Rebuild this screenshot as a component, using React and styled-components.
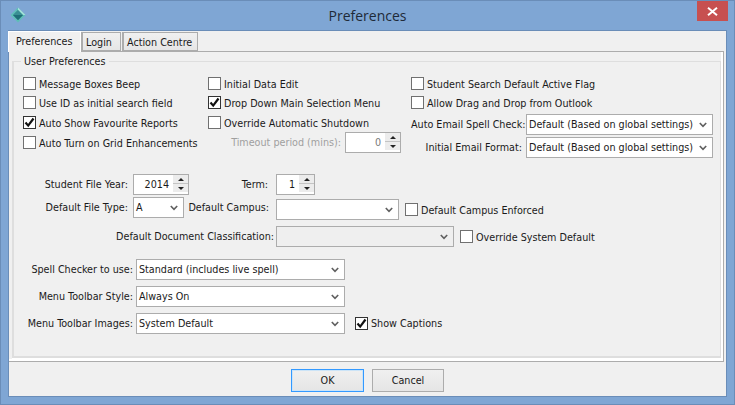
import React from "react";
import styled, { createGlobalStyle } from "styled-components";

const Global = createGlobalStyle`
  html, body { margin: 0; padding: 0; background: #7fa6d4; }
  * { box-sizing: border-box; }
`;

const Win = styled.div`
  width: 735px; height: 405px; overflow: hidden;
  background: #7fa6d4;
  border: 1px solid #6a8db8;
  display: flex; flex-direction: column;
  font-family: "DejaVu Sans Condensed", "DejaVu Sans", sans-serif;
  font-size: 10.7px; color: #1a1a1a;
`;
const TitleBar = styled.div`
  height: 29px; flex: none; position: relative;
  display: flex; align-items: center; justify-content: center;
  font-family: "Open Sans", sans-serif; font-size: 14px; color: #1e2a38;
  padding-bottom: 1px;
`;
const AppIcon = styled.svg`
  position: absolute; left: 9px; top: 6px; width: 16px; height: 16px;
`;
const Close = styled.div`
  position: absolute; right: 6px; top: 0; width: 31px; height: 20px;
  background: #c75050; display: flex; align-items: center; justify-content: center;
`;
const Client = styled.div`
  margin: 0 7px 7px 7px; flex: 1; min-height: 0;
  background: #f0f0f0; border: 1px solid #6a8db8;
  display: flex; flex-direction: column;
`;
const Tabs = styled.div`
  height: 20px; flex: none; display: flex; align-items: flex-end; margin-left: -1px;
  margin-right: 2px; position: relative; z-index: 1;
`;
const Tab = styled.div`
  border: 1px solid #acacac;
  border-bottom: ${p => (p.$active ? "none" : "1px solid #acacac")};
  border-color: ${p => (p.$active ? "#fff" : "#acacac")};
  border-left-width: ${p => (p.$active ? "1px" : "2px")};
  background: ${p => (p.$active ? "#f0f0f0" : "linear-gradient(#f0f0f0,#e6e6e6)")};
  height: ${p => (p.$active ? "21px" : "19px")};
  width: ${p => p.$w}px;
  margin-right: ${p => (p.$active ? "0" : "1px")};
  margin-bottom: ${p => (p.$active ? "-1px" : "0")};
  padding: ${p => (p.$active ? "0 0 2px 7px" : "1px 0 0 3px")};
  display: flex; align-items: center; white-space: nowrap;
`;
const Panel = styled.div`
  height: 311px; flex: none; margin-right: 2px;
  border-top: 1px solid #acacac; border-right: 1px solid #acacac; border-bottom: 1px solid #acacac;
  box-shadow: inset 0 -2px 0 #fff, inset -2px 0 0 #fff;
  padding: 9px 2px 2px 3px;
`;
const Group = styled.fieldset`
  margin: 0; padding: 0 0 0 9px; height: 297px; min-width: 0;
  border: 2px solid #dedede; border-top-width: 1px; border-right-width: 1px;
  box-shadow: 0 1px 0 #fff;
  position: relative;
`;
const Legend = styled.div`
  position: absolute; left: 7px; top: -7px; background: #f0f0f0; padding: 0 4px 0 3px;
  line-height: 13px;
`;
const Top = styled.div`
  display: flex; padding-top: 15px; height: 112px;
`;
const Col = styled.div`
  width: ${p => p.$w}px; flex: none; display: flex; flex-direction: column;
`;
const CheckRow = styled.label`
  display: flex; align-items: center; height: 13px; gap: 3px; white-space: nowrap;
  margin-bottom: ${p => p.$mb || 0}px;
`;
const CheckText = styled.span`
  padding-top: 1px;
`;
const Box = styled.span`
  width: 13px; height: 13px; flex: none; background: #fff; border: 1px solid ${p => (p.$on ? "#333" : "#707070")};
  display: inline-flex; align-items: center; justify-content: center;
`;
const Row = styled.div`
  display: flex; align-items: center; height: ${p => p.$h}px;
  margin-top: ${p => p.$mt || 0}px; margin-left: ${p => p.$ml || 0}px;
`;
const Label = styled.div`
  width: ${p => p.$w}px; flex: none; text-align: right; white-space: nowrap;
  padding-right: ${p => p.$pr ?? 4}px; color: ${p => (p.$off ? "#9f9f9f" : "inherit")};
`;
const Select = styled.div`
  width: ${p => p.$w}px; height: ${p => p.$h || 21}px; flex: none; position: relative;
  margin-top: ${p => p.$mt || 0}px;
  background: ${p => (p.$off ? "#efefef" : "#fff")}; border: 1px solid #acacac;
  display: flex; align-items: center; padding-left: 2px; white-space: nowrap;
`;
const Chevron = styled.svg`
  position: absolute; right: 5px; top: 7px; width: 8px; height: 6px;
`;
const Spin = styled.div`
  width: ${p => p.$w}px; height: 21px; flex: none; position: relative;
  background: #fff; border: 1px solid #acacac;
  display: flex; align-items: center; justify-content: flex-end; padding-right: 19px;
  color: ${p => (p.$off ? "#7a7a7a" : "inherit")};
`;
const SpinBtns = styled.div`
  position: absolute; right: 0; top: 0; width: 15px; height: 17px;
  display: flex; flex-direction: column;
  background: #ececec;
`;
const SpinBtn = styled.div`
  flex: 1; display: flex; align-items: center; justify-content: center;
  border-bottom: ${p => (p.$first ? "1px solid #c4c4c4" : "none")};
`;
const Footer = styled.div`
  flex: 1; display: flex; gap: 8px; justify-content: center; align-items: flex-start;
  padding-top: 7px;
`;
const Btn = styled.div`
  width: ${p => p.$w}px; height: 23px; display: flex; align-items: center; justify-content: center;
  background: linear-gradient(#f0f0f0, #e5e5e5);
  border: 1px solid ${p => (p.$def ? "#3399ff" : "#acacac")};
  box-shadow: ${p => (p.$def ? "inset 0 0 0 1px #cce4f7" : "none")};
`;

const Tick = () => (
  <svg width="11" height="11" viewBox="0 0 11 11">
    <path d="M1.5 5.5 L4.2 8.6 L9.5 1.5" fill="none" stroke="#111" strokeWidth="2.2" />
  </svg>
);
const Check = ({ on, children, mb }) => (
  <CheckRow $mb={mb}>
    <Box $on={on}>{on && <Tick />}</Box>
    <CheckText>{children}</CheckText>
  </CheckRow>
);
const Sel = ({ w, off, h, mt, children }) => (
  <Select $w={w} $off={off} $h={h} $mt={mt}>
    {children}
    <Chevron viewBox="0 0 8 6">
      <path d="M0.8 1 L4 4.4 L7.2 1" fill="none" stroke="#606060" strokeWidth="1.6" />
    </Chevron>
  </Select>
);
const Spinner = ({ w, off, value }) => (
  <Spin $w={w} $off={off}>
    {value}
    <SpinBtns>
      <SpinBtn $first>
        <svg width="6" height="3" viewBox="0 0 6 3"><path d="M3 0 L6 3 H0 Z" fill="#222" /></svg>
      </SpinBtn>
      <SpinBtn>
        <svg width="6" height="3" viewBox="0 0 6 3"><path d="M0 0 H6 L3 3 Z" fill="#222" /></svg>
      </SpinBtn>
    </SpinBtns>
  </Spin>
);

export default function App() {
  return (
    <Win>
      <Global />
      <TitleBar>
        <AppIcon viewBox="0 0 17 17">
          <path d="M8.5 0.5 L16.5 8.5 L8.5 16.5 L0.5 8.5 Z" fill="#5fc0b8" />
          <path d="M8.5 3 L14 8.5 H3 Z" fill="#3a8f94" />
          <path d="M3 8.5 H14 L8.5 14 Z" fill="#1f6f78" />
          <path d="M8.5 0.5 L16.5 8.5 H14 L8.5 3 Z" fill="#a5e2da" />
        </AppIcon>
        Preferences
        <Close>
          <svg width="11" height="9" viewBox="0 0 11 9">
            <path d="M1 0.8 L10 8.2 M10 0.8 L1 8.2" stroke="#fff" strokeWidth="2" />
          </svg>
        </Close>
      </TitleBar>
      <Client>
        <Tabs>
          <Tab $active $w={73}>Preferences</Tab>
          <Tab $w={40}>Login</Tab>
          <Tab $w={76}>Action Centre</Tab>
        </Tabs>
        <Panel>
          <Group>
            <Legend>User Preferences</Legend>
            <Top>
              <Col $w={185}>
                <Check mb={6}>Message Boxes Beep</Check>
                <Check mb={7}>Use ID as initial search field</Check>
                <Check on mb={7}>Auto Show Favourite Reports</Check>
                <Check>Auto Turn on Grid Enhancements</Check>
              </Col>
              <Col $w={203}>
                <Check mb={6}>Initial Data Edit</Check>
                <Check on mb={7}>Drop Down Main Selection Menu</Check>
                <Check mb={3}>Override Automatic Shutdown</Check>
                <Row $h={21}>
                  <Label $w={137} $off>Timeout period (mins):</Label>
                  <Spinner w={56} off value="0" />
                </Row>
              </Col>
              <Col $w={302}>
                <Check mb={6}>Student Search Default Active Flag</Check>
                <Check mb={5}>Allow Drag and Drop from Outlook</Check>
                <Row $h={21}>
                  <Label $w={115}>Auto Email Spell Check:</Label>
                  <Sel w={187}>Default (Based on global settings)</Sel>
                </Row>
                <Row $h={21} $mt={2}>
                  <Label $w={115}>Initial Email Format:</Label>
                  <Sel w={187}>Default (Based on global settings)</Sel>
                </Row>
              </Col>
            </Top>
            <Row $h={21}>
              <Label $w={110} $pr={5}>Student File Year:</Label>
              <Spinner w={56} value="2014" />
              <Label $w={87} $pr={8}>Term:</Label>
              <Spinner w={39} value="1" />
            </Row>
            <Row $h={21} $mt={2}>
              <Label $w={110} $pr={5}>Default File Type:</Label>
              <Sel w={51}>A</Sel>
              <Label $w={92} $pr={7}>Default Campus:</Label>
              <Sel w={123} mt={3}>{""}</Sel>
              <Row $h={13} $ml={6} $mt={4}><Check>Default Campus Enforced</Check></Row>
            </Row>
            <Row $h={21} $mt={8}>
              <Label $w={253} $pr={2}>Default Document Classification:</Label>
              <Sel w={178} off>{""}</Sel>
              <Row $h={13} $ml={6}><Check>Override System Default</Check></Row>
            </Row>
            <Row $h={21} $mt={12}>
              <Label $w={113} $pr={3}>Spell Checker to use:</Label>
              <Sel w={209}>Standard (includes live spell)</Sel>
            </Row>
            <Row $h={21} $mt={6}>
              <Label $w={113} $pr={3}>Menu Toolbar Style:</Label>
              <Sel w={209}>Always On</Sel>
            </Row>
            <Row $h={21} $mt={6}>
              <Label $w={113} $pr={3}>Menu Toolbar Images:</Label>
              <Sel w={209}>System Default</Sel>
              <Row $h={13} $ml={10} $mt={-1}><Check on>Show Captions</Check></Row>
            </Row>
          </Group>
        </Panel>
        <Footer>
          <Btn $def $w={73}>OK</Btn>
          <Btn $w={72}>Cancel</Btn>
        </Footer>
      </Client>
    </Win>
  );
}
